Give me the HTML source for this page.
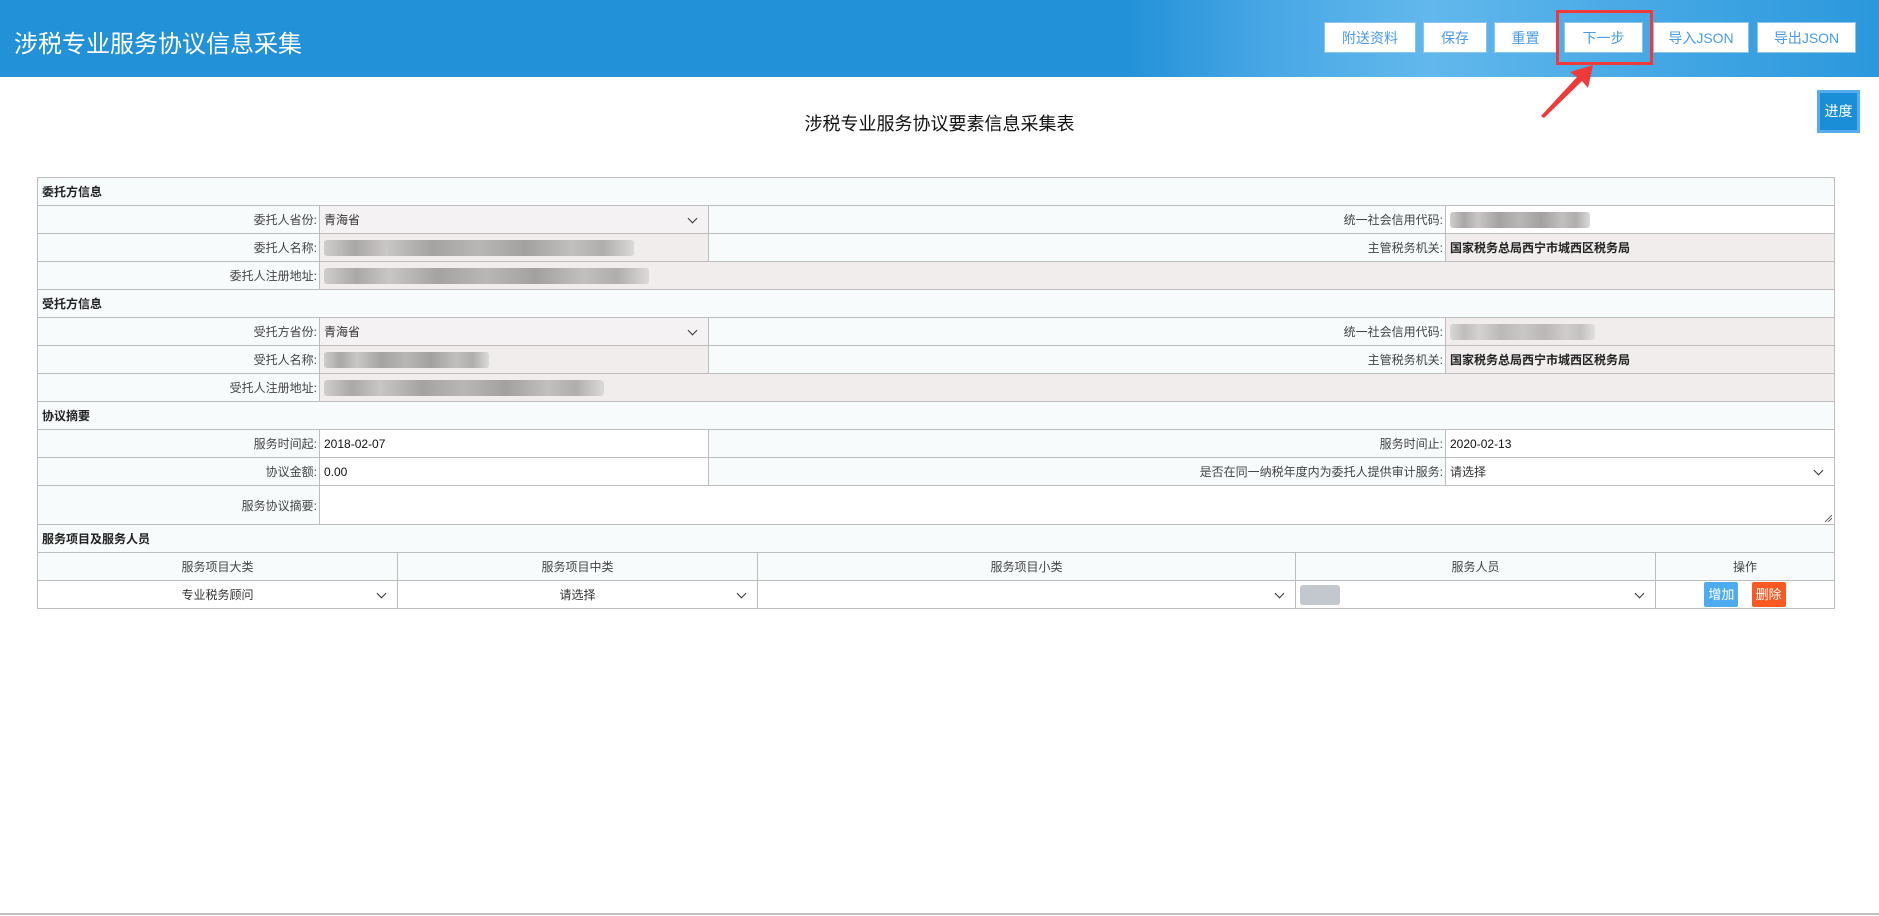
<!DOCTYPE html>
<html><head><meta charset="utf-8">
<style>
*{box-sizing:border-box;margin:0;padding:0}
body{width:1879px;height:916px;overflow:hidden;background:#fff;font-family:"Liberation Sans","Noto Sans CJK SC",sans-serif;font-size:12px;color:#333;position:relative}
.hdr{position:absolute;left:0;top:0;width:1879px;height:77px;background:linear-gradient(90deg,#2391d8 0%,#2391d8 60%,#4aa8e6 68%,#62b8ec 76%,#4aaae6 86%,#2a98dc 100%)}
.hdr .t{position:absolute;left:14px;top:24px;font-size:24px;color:#fff}
.btn{position:absolute;top:22px;height:31px;background:#fff;color:#4a9ae6;font-size:14px;text-align:center;line-height:31px;border:1px solid #8cc4ee}
.red{position:absolute;left:1556px;top:10px;width:97px;height:55px;border:3px solid #f03a3a}
.jd{position:absolute;left:1817px;top:90px;width:43px;height:43px;background:#1a8fd8;border:3px solid #55acee;color:#fff;font-size:14px;text-align:center;line-height:37px}
h1{position:absolute;left:0;width:1879px;top:110px;text-align:center;font-size:18px;font-weight:normal;color:#111}
table{position:absolute;left:37px;border-collapse:collapse;table-layout:fixed}
td{border:1px solid #bdbdbd;height:28px;padding:0 4px;white-space:nowrap;overflow:hidden}
.sec{background:#f7fbfc;font-weight:bold;color:#222}
.lb{background:#f7fbfc;text-align:right;color:#444;padding-right:2px}
.g{background:#f1eded}
.gs{background:#f4f2f2}
.sel{position:relative}
.sel:after{content:"";position:absolute;right:12px;top:9px;width:6px;height:6px;border-right:1.3px solid #333;border-bottom:1.3px solid #333;transform:rotate(45deg)}
.blur{display:inline-block;height:16px;vertical-align:middle;border-radius:3px;background:linear-gradient(90deg,#d0cdcd,#aaa7a7 10%,#c9c6c6 20%,#a5a2a2 35%,#b9b6b6 50%,#a3a0a0 65%,#c2bfbf 80%,#b0adad 90%,#dcd9d9)}
.hd td{background:#f7fbfc;text-align:center;color:#444}
.c{text-align:center}
.ab{display:inline-block;width:34px;height:25px;line-height:25px;color:#fff;border-radius:2px;font-size:13px;text-align:center}
</style></head><body>
<div class="hdr"><div class="t">涉税专业服务协议信息采集</div></div>
<div class="btn" style="left:1324px;width:92px">附送资料</div>
<div class="btn" style="left:1423px;width:64px">保存</div>
<div class="btn" style="left:1494px;width:63px">重置</div>
<div class="btn" style="left:1564px;width:79px">下一步</div>
<div class="btn" style="left:1653px;width:96px">导入JSON</div>
<div class="btn" style="left:1757px;width:99px">导出JSON</div>
<div class="red"></div>
<svg style="position:absolute;left:0;top:0" width="1879" height="140"><polygon points="1593,65 1588,88 1582,81 1544,118 1541,116 1577,77 1570,72" fill="#f03a3a"/></svg>
<div class="jd">进度</div>
<h1>涉税专业服务协议要素信息采集表</h1>

<table style="top:177px;width:1797px">
<colgroup><col style="width:282px"><col style="width:389px"><col style="width:737px"><col style="width:389px"></colgroup>
<tr><td colspan="4" class="sec">委托方信息</td></tr>
<tr><td class="lb">委托人省份:</td><td class="gs sel">青海省</td><td class="lb">统一社会信用代码:</td><td><span class="blur" style="width:140px"></span></td></tr>
<tr><td class="lb">委托人名称:</td><td class="g"><span class="blur" style="width:310px"></span></td><td class="lb">主管税务机关:</td><td class="g" style="font-weight:bold;color:#222">国家税务总局西宁市城西区税务局</td></tr>
<tr><td class="lb">委托人注册地址:</td><td colspan="3" class="g"><span class="blur" style="width:325px"></span></td></tr>
<tr><td colspan="4" class="sec">受托方信息</td></tr>
<tr><td class="lb">受托方省份:</td><td class="gs sel">青海省</td><td class="lb">统一社会信用代码:</td><td class="g"><span class="blur" style="width:145px;opacity:.7"></span></td></tr>
<tr><td class="lb">受托人名称:</td><td class="g"><span class="blur" style="width:165px"></span></td><td class="lb">主管税务机关:</td><td class="g" style="font-weight:bold;color:#222">国家税务总局西宁市城西区税务局</td></tr>
<tr><td class="lb">受托人注册地址:</td><td colspan="3" class="g"><span class="blur" style="width:280px"></span></td></tr>
<tr><td colspan="4" class="sec">协议摘要</td></tr>
<tr><td class="lb">服务时间起:</td><td style="color:#111">2018-02-07</td><td class="lb">服务时间止:</td><td style="color:#111">2020-02-13</td></tr>
<tr><td class="lb">协议金额:</td><td style="color:#111">0.00</td><td class="lb">是否在同一纳税年度内为委托人提供审计服务:</td><td class="sel">请选择</td></tr>
<tr><td class="lb" style="height:39px">服务协议摘要:</td><td colspan="3" style="height:39px;position:relative"><svg style="position:absolute;right:2px;bottom:2px" width="8" height="8"><path d="M1 8L8 1M4 8L8 4" stroke="#666" stroke-width="1"/></svg></td></tr>
<tr><td colspan="4" class="sec">服务项目及服务人员</td></tr>
</table>
<table style="top:552px;width:1797px">
<colgroup><col style="width:360px"><col style="width:360px"><col style="width:538px"><col style="width:360px"><col style="width:179px"></colgroup>
<tr class="hd"><td>服务项目大类</td><td>服务项目中类</td><td>服务项目小类</td><td>服务人员</td><td>操作</td></tr>
<tr><td class="c sel">专业税务顾问</td><td class="c sel">请选择</td><td class="sel"></td><td class="sel"><span class="blur" style="width:40px;height:20px;background:#c3c8ce"></span></td><td class="c"><span class="ab" style="background:#4dabf0">增加</span>&nbsp;&nbsp;&nbsp;&nbsp;<span class="ab" style="background:#fa5a22">删除</span></td></tr>
</table>
<div style="position:absolute;left:0;top:913px;width:1879px;height:2px;background:#c0c0c0"></div>
</body></html>
